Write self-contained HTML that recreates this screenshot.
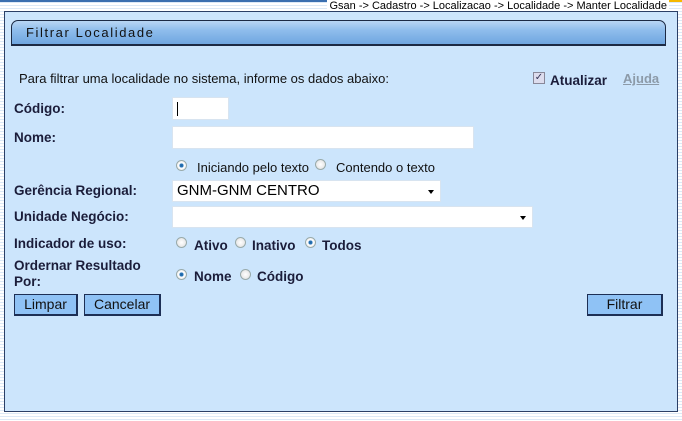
<!DOCTYPE html>
<html><head><meta charset="utf-8"><style>
*{margin:0;padding:0;box-sizing:border-box}
body{width:682px;height:421px;overflow:hidden;position:relative;font-family:"Liberation Sans",Arial,sans-serif;
background:repeating-linear-gradient(to bottom,#fff 0,#fff 2px,#dce9f7 2px,#dce9f7 3px);}
.abs{position:absolute}
#top{left:0;top:0;width:682px;height:2px;background:#3a6fb0}
#topy{left:420px;top:0;width:262px;height:2px;background:#f5b800}
#bc{right:13px;top:0;font-size:11px;color:#000;background:#fff;padding:0 2px;line-height:12px}
#panel{left:4px;top:11px;width:674px;height:401px;background:#cce5fc;border:1px solid #2b3f66}
#hdr{left:11px;top:20px;width:655px;height:26px;border:1px solid #1c2a44;border-bottom:2px solid #1c2a44;border-radius:7px 7px 0 0;
background:linear-gradient(#b9d6f4 0,#8fbdec 40%,#6fa6e0 100%);}
#hdr span{position:absolute;left:14px;top:4px;font-size:13px;letter-spacing:1.6px;color:#111}
.t{font-size:13px;color:#111}
.l{font-size:13.5px;font-weight:bold;color:#1b1d3a}
.in{background:#fff;border:1px solid #d8e4f0}
.sel{background:#fff;border:1px solid #d8e4f0;font-size:15px;padding:1px 4px;color:#000}
.sel:after{content:"";position:absolute;right:6px;top:9px;border:3.5px solid transparent;border-top:4px solid #000}
.r{width:11px;height:11px;border-radius:50%;border:1px solid #9aa;background:radial-gradient(#fff,#ddd)}
.r.on{background:radial-gradient(#1f5f9a 0,#2a7ac0 30%,#fff 36%,#e6e6e6 100%)}
.btn{height:22px;background:#8fc2f5;border:1px solid #1d2f55;border-width:1px 2px 2px 1px;font-size:14px;text-align:center;line-height:19px;color:#111}
</style></head><body>
<div class="abs" id="top"></div><div class="abs" id="topy"></div>
<div class="abs" id="bc">Gsan -&gt; Cadastro -&gt; Localizacao -&gt; Localidade -&gt; Manter Localidade</div>
<div class="abs" id="panel"></div>
<div class="abs" id="hdr"><span>Filtrar Localidade</span></div>
<div class="abs t" style="left:19px;top:71px">Para filtrar uma localidade no sistema, informe os dados abaixo:</div>
<div class="abs" style="left:533px;top:72px;width:12px;height:12px;border:1px solid #889;background:#dde;font-size:10px;line-height:10px;text-align:center;color:#335">✓</div>
<div class="abs l" style="left:550px;top:73px;font-size:13.5px">Atualizar</div>
<div class="abs" style="left:623px;top:71px;font-size:13px;font-weight:bold;color:#8c9aa8;text-decoration:underline">Ajuda</div>

<div class="abs l" style="left:14px;top:101px">Código:</div>
<div class="abs in" style="left:172px;top:97px;width:57px;height:23px"><div style="position:absolute;left:4px;top:4px;width:1px;height:14px;background:#000"></div></div>
<div class="abs l" style="left:14px;top:130px">Nome:</div>
<div class="abs in" style="left:172px;top:126px;width:302px;height:23px"></div>

<div class="abs r on" style="left:176px;top:160px"></div>
<div class="abs t" style="left:197px;top:160px">Iniciando pelo texto</div>
<div class="abs r" style="left:315px;top:159px"></div>
<div class="abs t" style="left:336px;top:160px">Contendo o texto</div>

<div class="abs l" style="left:14px;top:183px">Gerência Regional:</div>
<div class="abs sel" style="left:172px;top:180px;width:269px;height:22px">GNM-GNM CENTRO</div>
<div class="abs l" style="left:14px;top:209px">Unidade Negócio:</div>
<div class="abs sel" style="left:172px;top:206px;width:361px;height:22px"></div>

<div class="abs l" style="left:14px;top:236px">Indicador de uso:</div>
<div class="abs r" style="left:176px;top:237px"></div>
<div class="abs l" style="left:194px;top:238px">Ativo</div>
<div class="abs r" style="left:235px;top:237px"></div>
<div class="abs l" style="left:252px;top:238px">Inativo</div>
<div class="abs r on" style="left:305px;top:237px"></div>
<div class="abs l" style="left:322px;top:238px">Todos</div>

<div class="abs l" style="left:14px;top:258px;line-height:16px">Ordernar Resultado<br>Por:</div>
<div class="abs r on" style="left:176px;top:269px"></div>
<div class="abs l" style="left:194px;top:269px">Nome</div>
<div class="abs r" style="left:240px;top:269px"></div>
<div class="abs l" style="left:257px;top:269px">Código</div>

<div class="abs btn" style="left:14px;top:294px;width:64px">Limpar</div>
<div class="abs btn" style="left:84px;top:294px;width:77px">Cancelar</div>
<div class="abs btn" style="left:587px;top:294px;width:76px">Filtrar</div>
</body></html>
